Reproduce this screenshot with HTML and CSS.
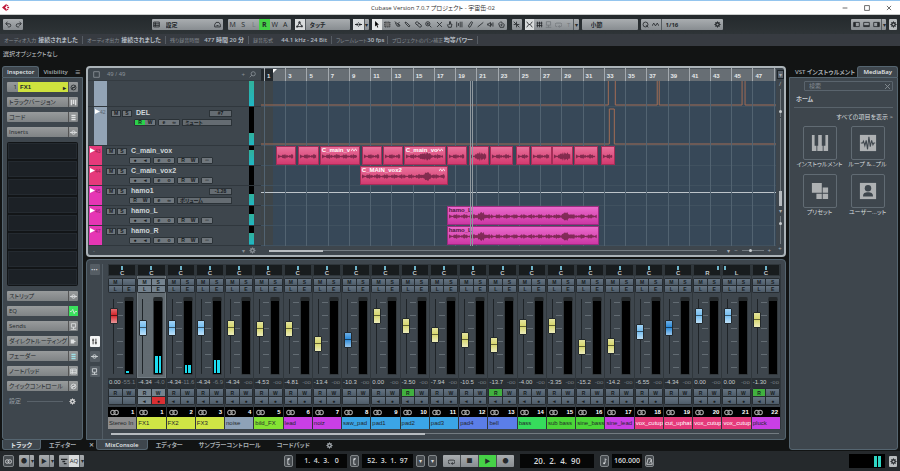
FILE: index.html
```html
<!DOCTYPE html>
<html lang="ja">
<head>
    <meta charset="UTF-8">
    <meta name="viewport" content="width=device-width, initial-scale=1.0">
    <title>Cubase Version 7.0.7 プロジェクト - 宇宙缶-02</title>
    <link rel="stylesheet" href="styles.css">
</head>
<body>

    <svg class="sprite" aria-hidden="true">
        <symbol id="i-undo" viewBox="0 0 10 10"><path d="M3.5 1L1 4l3 2.5M1.5 4H6a2.2 2.2 0 0 1 0 4.500H4"/></symbol>
        <symbol id="i-redo" viewBox="0 0 10 10"><path d="M6.5 1L9 4 6 6.5M8.5 4H4a2.2 2.2 0 0 0 0 4.500h2"/></symbol>
        <symbol id="i-list" viewBox="0 0 10 10"><path d="M1 1.5h8v7H1zM1 4h8M1 6.300h8M3.5 2v6"/></symbol>
        <symbol id="i-box" viewBox="0 0 10 10"><path d="M1 1h8v8H1z"/></symbol>
        <symbol id="i-camera" viewBox="0 0 10 10"><path d="M1 8.500V5l2-3h4l2 3v3.500zM3.500 6.500h3"/></symbol>
        <symbol id="i-auto" viewBox="0 0 10 10"><path d="M1 8h8M2 8l3-6 3 5"/><circle cx="5" cy="2" r="1.200"/><circle cx="1.500" cy="8" r="1"/><circle cx="8.500" cy="7.500" r="1"/></symbol>
        <symbol id="i-scroll" viewBox="0 0 12 10"><path class="f" d="M0 4h3V2l3 3-3 3V6H0zM12 4H9V2L6 5l3 3V6h3z"/><path d="M6 1v2M6 7v2"/></symbol>
        <symbol id="i-arrow" viewBox="0 0 10 10"><path class="f" d="M3 0v8l2-2 1.500 3.500 1-.5L6 5.500h2.500z"/></symbol>
        <symbol id="i-range" viewBox="0 0 10 10"><path class="g" d="M1 1.500h7.500v7H1z"/><path d="M1 1.500h7.500v7H1z" stroke-dasharray="1.500 1"/></symbol>
        <symbol id="i-split" viewBox="0 0 10 10"><path d="M1 1l7 5M2 3l3 5M5 4l3-2"/><circle cx="7" cy="6.500" r="1.300"/></symbol>
        <symbol id="i-pen" viewBox="0 0 10 10"><path d="M1.500 1.500l1 2.500 4.500 4.500 1.500-1.500L4 2.500z"/></symbol>
        <symbol id="i-erase" viewBox="0 0 10 10"><path d="M1 2l2-1 6 5v2l-2 1-6-5zM4 5l2-2"/></symbol>
        <symbol id="i-zoom" viewBox="0 0 10 10"><circle cx="4" cy="4" r="3"/><path d="M6.200 6.200L9 9M2.500 4h3M4 2.500v3"/></symbol>
        <symbol id="i-x" viewBox="0 0 10 10"><path d="M1.500 1.500l7 7M8.500 1.500l-7 7"/></symbol>
        <symbol id="i-hand" viewBox="0 0 10 10"><path d="M2 5l1.500 4h4L8.500 4.500H6.500V1H5v4H3.500"/></symbol>
        <symbol id="i-warp" viewBox="0 0 10 10"><path d="M1 1v8M3.500 3v4M6 1v8M8.500 1v8"/></symbol>
        <symbol id="i-brush" viewBox="0 0 10 10"><path d="M3 9L2 7l4-6 2 1-3 6z"/></symbol>
        <symbol id="i-line" viewBox="0 0 10 10"><path d="M1 8.500L9 2"/></symbol>
        <symbol id="i-speaker" viewBox="0 0 10 10"><path d="M1 4v2h1.500L5 8V2L2.500 4zM6.500 3.500v3M8.500 2v6"/></symbol>
        <symbol id="i-fill" viewBox="0 0 10 10"><path d="M1 4l3-3 5 4-1 4H3z"/><circle cx="5" cy="5.500" r="1"/></symbol>
        <symbol id="i-cross" viewBox="0 0 10 10"><path d="M1 1l4 4V1M5 5v4M5 5h4M1 5h3M6 6l3 3"/></symbol>
        <symbol id="i-snap" viewBox="0 0 10 10"><path d="M1 1l3 4-3 4M9 1L6 5l3 4M4 5h2"/></symbol>
        <symbol id="i-grid" viewBox="0 0 10 10"><path d="M2 1v8M5 1v8M8 1v8M1 3h8M1 6.500h8"/></symbol>
        <symbol id="i-gear" viewBox="0 0 10 10"><circle cx="5" cy="5" r="2.500" stroke-width="2"/><path d="M5 .5v2M5 7.500v2M.5 5h2M7.500 5h2M2 2l1.500 1.500M6.500 6.500L8 8M8 2L6.500 3.500M3.500 6.500L2 8"/></symbol>
        <symbol id="i-zoneL" viewBox="0 0 10 8"><path d="M1 1h8v6H1z"/><path class="f" d="M1 1h3v6H1z"/></symbol>
        <symbol id="i-zoneB" viewBox="0 0 10 8"><path d="M1 1h8v6H1z"/><path class="f" d="M1 5h8v2H1z"/></symbol>
        <symbol id="i-zoneR" viewBox="0 0 10 8"><path d="M1 1h8v6H1z"/><path class="f" d="M6 1h3v6H6z"/></symbol>
        <symbol id="i-wave" viewBox="0 0 10 10"><path d="M0 7l2.500-4 2.500 4 2.500-4L10 7"/></symbol>
        <symbol id="i-q" viewBox="0 0 10 10"><circle cx="5" cy="5" r="3.500"/><path d="M5.500 6L9 9"/></symbol>
        <symbol id="i-search" viewBox="0 0 10 10"><circle cx="6" cy="4" r="3"/><path d="M4 6L1 9"/></symbol>
        <symbol id="i-bars" viewBox="0 0 10 10"><path class="f" d="M1 1h2v8H1zM4 1h2v6H4zM7 1h2v8H7z"/></symbol>
        <symbol id="i-chord" viewBox="0 0 10 10"><path class="f" d="M2 1h6v2H2zM2 4h6v2H2zM2 7h6v2H2z"/></symbol>
        <symbol id="i-quantpanel" viewBox="0 0 10 10"><path class="f" d="M0 1h9v2H0zM2 4h4v2H2zM4 7h4v2H4z"/></symbol>
        <symbol id="i-ins" viewBox="0 0 10 10"><circle cx="5" cy="5" r="2.500"/><path d="M0 5h10"/></symbol>
        <symbol id="i-eq" viewBox="0 0 10 10"><path d="M0 5h2l2-3 2 6 1.500-3H10"/></symbol>
        <symbol id="i-send" viewBox="0 0 10 10"><path d="M2 1h6v5H2zM5 6v3M1 9h8"/></symbol>
        <symbol id="i-route" viewBox="0 0 10 10"><path class="f" d="M1 2h5v6H1zM6 4l3 1-3 1z"/></symbol>
        <symbol id="i-bypass" viewBox="0 0 10 10"><circle cx="5" cy="5" r="3.500"/><path d="M2.500 7.500L8 2.500M3 5h4"/></symbol>
        <symbol id="i-stereo" viewBox="0 0 10 8"><circle cx="3.200" cy="4" r="2.600"/><circle cx="6.800" cy="4" r="2.600"/></symbol>
        <symbol id="i-fader" viewBox="0 0 10 10"><path d="M3 1v8M7 1v8M1.500 3h3M5.500 7h3"/></symbol>
        <symbol id="i-loop" viewBox="0 0 10 10"><path d="M3 8H2.500a2.500 2.500 0 0 1 0-5h5a2.500 2.500 0 0 1 0 5H5M6.500 6L5 8l1.500 1.500"/></symbol>
        <symbol id="i-metro" viewBox="0 0 10 10"><path d="M3 1h4l2 8H1zM5 7l3-5"/></symbol>
        <symbol id="i-note" viewBox="0 0 10 10"><path d="M6 1v6M6 1l2 2"/><circle class="f" cx="4.500" cy="7.500" r="1.500"/></symbol>
        <symbol id="i-loc" viewBox="0 0 10 10"><path d="M7 1H4v8h3"/><path class="f" d="M4 1h3L4 4z"/></symbol>
        <symbol id="i-audio" viewBox="0 0 10 10"><path class="f" d="M0 0l10 5-10 5z"/></symbol>
        <symbol id="i-keys" viewBox="0 0 20 20"><path class="f" d="M1 1h3v12h2v6H1zM8 1h0v12H7v6h6v-6h-1V1h-1v0H8zM16 1h3v18h-5v-6h2z"/></symbol>
        <symbol id="i-loopfile" viewBox="0 0 20 20"><path class="f" d="M1 1h18v18H1z"/><path class="d" d="M2 10h2l1-2 1.500 5L8 7l1.500 10L11 3l1.500 11L14 7l1.500 5 1-2H18"/></symbol>
        <symbol id="i-preset" viewBox="0 0 20 20"><path class="f" d="M1 1h11v11H1zM13 6h6v6h-6zM6 13h6v6H6zM13 13h6v6h-6z"/></symbol>
        <symbol id="i-user" viewBox="0 0 20 20"><path class="f" d="M1 1h18v18H1z"/><path class="hole" d="M4.500 16c0-3.500 2-4.500 5.500-4.500s5.500 1 5.500 4.500z"/><circle class="hole" cx="10" cy="7" r="3.600"/></symbol>
    </svg>

    <header class="titlebar">
        <svg class="logo" viewBox="0 0 12 10" aria-label="Cubase"><path d="M6 0L0 5l6 5V7L4 5l2-2zM6.500 1L9 3H6.500zM7 4h2.500v2H7zM6.500 7H9L6.500 9z"/></svg>
        <h1>Cubase Version 7.0.7 プロジェクト - 宇宙缶-02</h1>
        <div class="window-buttons">
            <button aria-label="最小化"><svg viewBox="0 0 10 10"><path d="M1 5h8"/></svg></button>
            <button aria-label="最大化"><svg viewBox="0 0 10 10"><path d="M1 1h8v8H1z"/></svg></button>
            <button aria-label="閉じる"><svg viewBox="0 0 10 10"><use href="#i-x"/></svg></button>
        </div>
    </header>

    <nav class="toolbar" aria-label="ツールバー">
        <div class="group">
            <button aria-label="元に戻す"><svg><use href="#i-undo"/></svg></button>
            <button aria-label="やり直し"><svg><use href="#i-redo"/></svg></button>
        </div>
        <div class="toolbar-center">
            <div class="group config">
                <button aria-label="一覧"><svg><use href="#i-list"/></svg></button>
                <select aria-label="設定"><option>設定</option></select>
                <button aria-label="スナップショット"><svg><use href="#i-camera"/></svg></button>
            </div>
            <div class="group states">
                <button>M</button><button>S</button><button class="dim">L</button><button class="on">R</button><button>W</button><button>A</button>
            </div>
            <div class="group touch">
                <button class="lit" aria-label="オートメーション"><svg><use href="#i-auto"/></svg></button>
                <select aria-label="オートメーションモード"><option>タッチ</option></select>
            </div>
            <div class="group scroll">
                <button class="lit" aria-label="自動スクロール"><svg><use href="#i-scroll"/></svg></button>
                <button class="drop" aria-label="スクロール設定">▾</button>
            </div>
            <div class="group tools" id="tools"></div>
            <div class="group"><button aria-label="ゼロクロス"><svg><use href="#i-cross"/></svg></button></div>
            <div class="group snap">
                <button class="lit" aria-label="スナップ"><svg><use href="#i-snap"/></svg></button>
                <button aria-label="グリッド"><svg><use href="#i-grid"/></svg></button>
                <button class="dim" aria-label="イベント"><svg><use href="#i-send"/></svg></button>
                <button class="dim" aria-label="シャッフル"><svg><use href="#i-loop"/></svg></button>
                <button class="dim">T</button>
                <button class="drop" aria-label="スナップ設定">▾</button>
            </div>
            <div class="group bar"><select aria-label="グリッドの間隔"><option>小節</option></select></div>
            <div class="group quantize">
                <button aria-label="クオンタイズ"><svg><use href="#i-q"/></svg></button>
                <button aria-label="ソフト"><svg><use href="#i-wave"/></svg></button>
                <select aria-label="クオンタイズ値"><option>1/16</option></select>
                <button aria-label="クオンタイズ設定"><svg><use href="#i-gear"/></svg></button>
            </div>
        </div>
        <div class="toolbar-right">
            <div class="group">
                <button aria-label="左ゾーン"><svg><use href="#i-zoneL"/></svg></button>
                <button aria-label="下ゾーン"><svg><use href="#i-zoneB"/></svg></button>
                <button aria-label="右ゾーン"><svg><use href="#i-zoneR"/></svg></button>
                <button class="drop" aria-label="ゾーン設定">▾</button>
            </div>
            <button class="gear lit" aria-label="設定"><svg><use href="#i-gear"/></svg></button>
        </div>
    </nav>

    <dl class="info">
        <div><dt>オーディオ入力</dt><dd>接続されました</dd></div>
        <div><dt>オーディオ出力</dt><dd>接続されました</dd></div>
        <div><dt>残り録音時間</dt><dd>477 時間 20 分</dd></div>
        <div><dt>録音形式</dt><dd>44.1 kHz - 24 Bit</dd></div>
        <div class="narrow"><dt>フレームレート</dt><dd>30 fps</dd></div>
        <div><dt>プロジェクトのパン補正</dt><dd>均等パワー</dd></div>
    </dl>

    <p class="selection">選択オブジェクトなし</p>

    <main>
        <aside class="inspector">
            <div class="tabs top">
                <button class="tab active">Inspector</button>
                <button class="tab">Visibility</button>
                <button class="tab menu" aria-label="メニュー">≡</button>
            </div>
            <div class="panel">
                <div class="row track"><span class="num">1</span><button>FX1 <i>▸</i></button><span class="end"><svg><use href="#i-bypass"/></svg></span></div>
                <button class="row">トラックバージョン<span class="end"><svg><use href="#i-bars"/></svg></span></button>
                <button class="row">コード<span class="end"><svg><use href="#i-chord"/></svg></span></button>
                <button class="row">Inserts<span class="end"><svg><use href="#i-ins"/></svg></span></button>
                <div class="slots"><i></i><i></i><i></i><i></i><i></i><i></i><i></i><i></i></div>
                <button class="row">ストリップ<span class="end"><svg><use href="#i-ins"/></svg></span></button>
                <button class="row">EQ<span class="end green"><svg><use href="#i-eq"/></svg></span></button>
                <button class="row">Sends<span class="end"><svg><use href="#i-send"/></svg></span></button>
                <button class="row">ダイレクトルーティング<span class="end"><svg><use href="#i-route"/></svg></span></button>
                <button class="row">フェーダー<span class="end cyan"><svg><use href="#i-chord"/></svg></span></button>
                <button class="row">ノートパッド<span class="end"><svg><use href="#i-list"/></svg></span></button>
                <button class="row">クイックコントロール<span class="end"><svg><use href="#i-bypass"/></svg></span></button>
                <button class="settings">設定<hr><svg><use href="#i-gear"/></svg></button>
            </div>
            <div class="tabs bottom">
                <button class="tab active">トラック</button>
                <button class="tab">エディター</button>
            </div>
        </aside>

        <div class="center">
            <section class="project">
                <div class="tracks">
                    <div class="tracks-head"><svg><use href="#i-box"/></svg><span>49 / 49</span><button aria-label="トラックを追加">+</button><button aria-label="検索"><svg><use href="#i-search"/></svg></button></div>
                    <div id="track-list"></div>
                    <div class="tracks-foot"><span>-</span><button aria-label="サイズ">▾</button><button aria-label="設定"><svg><use href="#i-gear"/></svg></button></div>
                </div>
                <div class="arrange">
                    <div class="timeline" id="timeline">
                        <div class="ruler"></div>
                        <div class="lanes"><i></i><i></i><i></i><i></i><i></i><i></i><i></i></div>
                        <svg class="automation" viewBox="0 0 516 165" preserveAspectRatio="none">
                            <path d="M0 24H348V0M355 0V24H397V0M399 0V24H482V0M485 0V24H516M0 63H349V28H354V63H516"/>
                            <path class="light" d="M0 111.500H516"/>
                        </svg>
                        <svg class="flag" viewBox="0 0 4 4"><path class="f" d="M0 0h4L0 4z"/></svg>
                        <div class="playhead"></div>
                    </div>
                    <div class="h-scroll"><div class="scrollbar"><i></i></div><span>▾</span><span>−</span><input type="range" value="40" aria-label="横ズーム"><span>+</span></div>
                </div>
                <div class="v-scroll">
                    <button aria-label="表示設定">▾</button>
                    <span>∕</span>
                    <input type="range" value="15" aria-label="波形ズーム">
                    <div class="thumb-track"><i></i></div>
                    <span>▾</span>
                    <input type="range" value="75" aria-label="縦ズーム">
                    <span>+</span>
                </div>
            </section>

            <section class="mixer">
                <div class="mixer-side">
                    <button aria-label="メニュー">•••</button>
                    <button class="lit first" aria-label="フェーダー"><svg><use href="#i-fader"/></svg></button>
                    <button aria-label="インサート"><svg><use href="#i-ins"/></svg></button>
                    <button aria-label="センド"><svg><use href="#i-send"/></svg></button>
                </div>
                <div class="mixer-main">
                    <div class="channels" id="channels"></div>
                    <div class="scrollbar"><i></i></div>
                </div>
            </section>

            <div class="tabs bottom lower">
                <button class="tab close" aria-label="閉じる">✕</button>
                <button class="tab active">MixConsole</button>
                <button class="tab">エディター</button>
                <button class="tab">サンプラーコントロール</button>
                <button class="tab">コードパッド</button>
                <button class="tab" aria-label="設定"><svg><use href="#i-gear"/></svg></button>
            </div>
        </div>

        <aside class="media">
            <div class="tabs top">
                <button class="tab">VST インストゥルメント</button>
                <button class="tab active">MediaBay</button>
            </div>
            <div class="panel">
                <div class="search"><input type="text" placeholder="検索" aria-label="検索"><button aria-label="消去"><svg><use href="#i-x"/></svg></button></div>
                <h2>ホーム</h2>
                <a class="all" href="#">すべての項目を表示 &gt;</a>
                <div class="tiles">
                    <button class="tile"><span><svg><use href="#i-keys"/></svg></span>インストゥルメント</button>
                    <button class="tile"><span><svg><use href="#i-loopfile"/></svg></span>ループ &amp;...プル</button>
                    <button class="tile"><span><svg><use href="#i-preset"/></svg></span>プリセット</button>
                    <button class="tile"><span><svg><use href="#i-user"/></svg></span>ユーザー...ット</button>
                </div>
            </div>
        </aside>
    </main>

    <footer class="transport">
        <div class="t-group left">
            <button class="key" aria-label="オーディオ"><svg><use href="#i-stereo"/></svg></button>
            <div class="group"><button>●</button><button class="drop">▾</button></div>
            <div class="group"><button>▶</button><button class="drop">▾</button></div>
            <div class="group"><button aria-label="モード"><svg><use href="#i-quantpanel"/></svg></button><button class="lit">AQ</button><button class="drop">▾</button></div>
        </div>
        <div class="t-group mid">
            <button class="key" aria-label="左ロケーター"><svg><use href="#i-loc"/></svg></button>
            <output class="locator">1. &nbsp;4. &nbsp;3. &nbsp; 0</output>
            <button class="key" aria-label="右ロケーター"><svg><use href="#i-loc"/></svg></button>
            <output class="locator">52. &nbsp;3. &nbsp;1. &nbsp;97</output>
            <button class="key" aria-label="パンチイン">▾</button>
            <button class="key" aria-label="パンチアウト">▾</button>
            <div class="group play">
                <button aria-label="サイクル"><svg><use href="#i-loop"/></svg></button>
                <button aria-label="停止">■</button>
                <button class="on" aria-label="再生">▶</button>
                <button aria-label="録音">●</button>
            </div>
            <output class="position">20. &nbsp;2. &nbsp;4. &nbsp;90</output>
            <button class="key" aria-label="テンポ"><svg><use href="#i-note"/></svg></button>
            <output class="tempo">160.000</output>
            <button class="key" aria-label="メトロノーム"><svg><use href="#i-metro"/></svg></button>
        </div>
        <div class="t-group">
            <div class="level"><i></i><i></i></div>
            <button class="gear lit" aria-label="設定"><svg><use href="#i-gear"/></svg></button>
        </div>
    </footer>

    <script src="script.js"></script>
</body>
</html>
```

FILE: styles.css
```css
* { box-sizing: border-box; }
body {
    margin: 0;
    min-height: 100vh;
    display: flex;
    flex-direction: column;
    background: #121414;
    color: #c6cbcf;
    font: 6px/8px "Open Sans", "Noto Sans CJK JP", sans-serif;
    font-feature-settings: "palt";
}
button, select, input, output { font: inherit; color: inherit; }
button, select {
    appearance: none;
    border: 0;
    margin: 0;
    padding: 0;
    background: none;
    white-space: nowrap;
}
button { display: flex; align-items: center; justify-content: center; }
p, h1, h2, dl, dd, dt, hr { margin: 0; }
i { font-style: normal; }
svg { width: 7px; height: 7px; fill: none; stroke: currentColor; stroke-width: 1.2; flex: none; }
svg .f { fill: currentColor; stroke: none; }
svg .g { fill: #777; stroke: none; }
svg .d { stroke: #3e464d; }
svg .hole { fill: #3e464d; stroke: none; }
.sprite { position: absolute; width: 0; height: 0; }

/* title bar */
.titlebar {
    display: grid;
    grid-template-columns: 1fr auto 1fr;
    align-items: center;
    height: 15px;
    padding: 0 8px 0 2px;
    background: #fff;
    border-top: 1px solid #94c5ee;
    border-bottom: 1px solid #c9cccb;
    color: #333;
}
.titlebar h1 { font-size: 6px; font-weight: 400; padding-right: 28px; }
.logo { width: 9px; height: 9px; fill: #bd1638; stroke: none; }
.window-buttons { display: flex; justify-content: flex-end; gap: 16px; }
.window-buttons svg { width: 6px; height: 6px; }

/* toolbar */
.toolbar {
    display: flex;
    justify-content: space-between;
    align-items: center;
    height: 19px;
    padding: 0 3px;
    background: linear-gradient(#24292c, #2e3437);
}
.toolbar-center, .toolbar-right { display: flex; gap: 3px; }
.group {
    display: flex;
    height: 11px;
    background: linear-gradient(#a9adb0, #888d91);
    border-radius: 1px;
    color: #25292c;
}
.group button { flex: 1; min-width: 10px; }
.group .dim { color: #73787c; }
.group .on { background: #46d147; font-weight: 700; }
.group .lit { background: #d9dcdd; }
.group select { flex: 1; min-width: 0; padding: 0 4px; font-weight: 700; }
.group button.drop { flex: 0 0 5px; min-width: 5px; border-left: 1px solid #555b5f; }
.config { width: 71px; }
.config button { flex: 0 0 10px; }
.states { width: 63px; margin-left: 2px; font-size: 7px; }
.touch { width: 55px; margin-left: 1px; }
.touch button { flex: 0 0 10px; }
.touch select, .quantize select { border-left: 1px solid #555b5f; }
.scroll { width: 16px; }
.tools { width: 135px; }
.tools + .group { margin-left: 2px; }
.tools .lit { background: #e6e8e8; color: #000; }
.snap { width: 54px; }
.snap button { min-width: 8px; }
.bar { width: 56px; }
.bar select { padding-left: 9px; }
.quantize { width: 82px; }
.quantize button { flex: 0 0 10px; }
.gear { width: 8px; height: 11px; color: #25292c; background: #b9bdbf; border-radius: 1px; }

/* info line */
.info {
    display: flex;
    height: 12px;
    background: #373b41;
    align-items: center;
}
.info div {
    display: flex;
    justify-content: space-between;
    width: 83px;
    padding: 0 4px;
    border-right: 1px solid #565c63;
    white-space: nowrap;
}
.info .narrow { width: 56px; }
.info div:last-child { width: 90px; }
.info dt { font-size: 5px; color: #858b92; }
.info dd { font-weight: 600; color: #b4bbc3; }
.selection { padding: 4px 3px 8px; }

main { flex: 1; display: flex; gap: 3px; padding: 0 2px 1px; }

/* tabs and side panels */
.tabs { display: flex; }
.tab { height: 11px; padding: 0 6px; font-weight: 600; color: #a6acb1; }
.tab.active { background: #3e464d; border: 1px solid #556570; color: #e3e7ea; }
.tabs.top .active { border-bottom: 0; border-radius: 3px 3px 0 0; }
.tabs.bottom .tab { height: 10px; }
.tabs.bottom .active { border-top: 0; border-radius: 0 0 3px 3px; }
.panel {
    flex: 1;
    background: #3e464d;
    border: 1px solid #556570;
    border-radius: 0 0 3px 3px;
}
.inspector { width: 81px; display: flex; flex-direction: column; }
.inspector .tabs.bottom .tab { padding: 0 8px; }
.inspector .tabs.top .tab { padding: 0 4px; }
.inspector .tabs.top .menu { margin-left: auto; padding: 0 3px; }
.inspector .panel { display: flex; flex-direction: column; gap: 5px; padding: 4px; }
.row {
    display: flex;
    justify-content: space-between;
    align-items: center;
    width: 100%;
    height: 10px;
    padding-left: 2px;
    background: linear-gradient(#989b9c, #7f8385);
    border-radius: 1px;
    color: #24282b;
}
.row .end {
    display: flex;
    align-items: center;
    justify-content: center;
    width: 10px;
    height: 10px;
    border-left: 1px solid #555;
    color: #e0e2e3;
}
.row .green { background: #39e05c; }
.row .cyan { color: #9ee0e6; }
.track .num { width: 9px; text-align: right; padding-right: 1px; }
.track button { flex: 1; height: 10px; padding: 0 2px; justify-content: space-between; background: #cfe23e; font: bold 6px "Liberation Sans", sans-serif; }
.track .end { color: #24282b; }
.slots { height: 144px; padding: 1px; display: flex; flex-direction: column; gap: 2px; background: #121517; border-radius: 2px; }
.slots i { flex: 1; background: #1c2126; border: 1px solid #242a30; }
.settings { padding: 0 2px; gap: 6px; height: 10px; color: #989fa5; }
.settings hr { flex: 1; border: 0; border-top: 1px solid #59626a; }
.settings svg { color: #ddd; }

/* project window */
.center { flex: 1; min-width: 0; display: flex; flex-direction: column; }
.project {
    display: flex;
    margin-bottom: 2px;
    border: 2px solid #abb3b8;
    border-radius: 4px;
    background: #3e464d;
}
.tracks { width: 173px; font-family: "Liberation Sans", "Noto Sans CJK JP", sans-serif; }
.tracks-head, .tracks-foot { display: flex; align-items: center; gap: 4px; padding: 0 5px; color: #899097; }
.tracks-head { height: 13px; border-bottom: 1px solid #343b41; }
.tracks-head span, .tracks-foot span { flex: 1; padding-left: 3px; }
.tracks-foot { height: 9px; }
.tracks-foot span { padding: 0; }
.track-row {
    display: flex;
    height: 20px;
    border-bottom: 1px solid #30373d;
    padding: 0 4px 0 1px;
}
.track-row.sub { height: 26px; }
.track-row.del { height: 39px; }
.strip { width: 13px; padding: 2px 0 0 1px; color: #fff; font-size: 5px; line-height: 6px; background: var(--c); white-space: nowrap; }
.strip svg { width: 5px; height: 5px; }
.strip b { opacity: .4; color: #000; font-weight: 400; }
.sub .strip, .del .strip { margin-left: 5px; }
.track-body { flex: 1; display: flex; flex-direction: column; gap: 2px; padding: 1px 17px 0 4px; }
.del .track-body { padding-top: 2px; }
.line { display: flex; gap: 1px; align-items: center; height: 8px; }
.line b { flex: 1; padding-left: 3px; font-size: 7px; color: #d0d6da; }
.line.ctl { padding-left: 23px; gap: 2px; height: 7px; }
.mini { display: flex; background: #70777d; border: 1px solid #2b3237; border-radius: 1px; height: 7px; width: 22px; }
.mini button, .ms { flex: 1; font-size: 5px; line-height: 5px; font-weight: 700; color: #14181b; }
.mini .on { background: #2bd04b; }
.mini.kbd { width: 12px; }
.ms { flex: none; width: 10px; height: 7px; background: #70777d; border: 1px solid #2b3237; }
.value { width: 23px; height: 7px; border: 1px solid #2b3237; background: #656c72; color: #14181b; font-size: 5px; line-height: 5px; text-align: center; font-weight: 700; }
.value.wide { flex: 1; text-align: left; padding-left: 2px; }
.meter { width: 5px; margin-right: 3px; background: linear-gradient(to top, #20b6c5, #31b09a) bottom / 100% var(--l) no-repeat #000; }

.arrange { flex: 1; min-width: 0; display: flex; flex-direction: column; }
.timeline { position: relative; overflow: hidden; flex: 1; background: linear-gradient(to right, #3e4549 12px, #374858 12px); }
.ruler { height: 13px; border-top: 1px solid #495158; background: linear-gradient(to right, #22282d 12px, #676e74 12px); }
.lanes i { display: block; height: 20px; border-bottom: 1px solid #40515f; }
.lanes i:nth-child(1) { height: 26px; }
.lanes i:nth-child(2) { height: 39px; }
.bar-line { position: absolute; top: 0; bottom: 0; border-left: 1px solid #526371; font: bold 6px/13px "Liberation Sans", sans-serif; color: #e6e9eb; }
.bar-line span { display: block; height: 13px; padding: 2px 0 0 2px; border-left: 1px solid #a3a9ae; margin-left: -1px; }
.automation { position: absolute; top: 13px; left: 0; width: 100%; height: 165px; stroke: #a36c54; }
.automation path { vector-effect: non-scaling-stroke; stroke-width: 1px; }
.automation .light { stroke: #bdc4ca; }
.flag { position: absolute; top: 1px; left: 12px; width: 4px; height: 4px; color: #fff; }
.playhead { position: absolute; top: 13px; bottom: 0; left: 40.5%; width: 3px; border: 1px solid #8f989e; border-width: 0 1px; }
.clip {
    position: absolute;
    height: 19px;
    overflow: hidden;
    border: 1px solid #a52e58;
    background: linear-gradient(#e8709a, #d43a70);
    color: #fff;
    font: bold 6px/7px "Liberation Sans", sans-serif;
    white-space: nowrap;
    padding-left: 1px;
}
.clip.hamo { background: linear-gradient(#ea6acb, #cd37a5); border-color: #9c2b80; color: #4c1740; }
.clip .wave { position: absolute; left: 0; top: 0; width: 100%; height: 100%; fill: #6b2241; fill-opacity: .8; stroke: none; }
.clip .mark { position: absolute; right: 2px; top: 0; width: 6px; height: 6px; }
.h-scroll { height: 9px; display: flex; align-items: center; gap: 4px; padding: 0 5px 0 8px; color: #a9b0b5; }
.scrollbar { flex: 1; height: 1px; background: #737b81; display: flex; align-items: center; }
.scrollbar i { height: 2px; width: 12%; flex: none; background: #b6bbbf; }
.h-scroll .scrollbar { margin-right: 6px; }
.h-scroll input { appearance: none; width: 22px; height: 1px; margin: 0; background: #737b81; }
.h-scroll input::-webkit-slider-thumb, .v-scroll input::-webkit-slider-thumb { appearance: none; width: 3px; height: 3px; border-radius: 2px; background: #c8cdd0; }
.v-scroll { width: 8px; padding: 2px 0; display: flex; flex-direction: column; align-items: center; gap: 1px; color: #a9b0b5; }
.v-scroll button { width: 7px; height: 9px; border: 1px solid #1e2429; background: #59616a; }
.v-scroll input { appearance: none; writing-mode: vertical-lr; direction: rtl; width: 1px; height: 28px; margin: 0; background: #737b81; }
.thumb-track { flex: 1; width: 3px; display: flex; flex-direction: column; justify-content: flex-end; background: linear-gradient(#737b81, #737b81) center / 1px 100% no-repeat; }
.thumb-track i { height: 15px; background: #b6bbbf; }

/* mixer */
.mixer {
    flex: 1;
    display: flex;
    padding: 4px 4px 0 0;
    background: #3e464d;
    border: 1px solid #556570;
    border-radius: 4px 4px 3px 0;
}
.mixer-side { width: 16px; margin-right: 5px; display: flex; flex-direction: column; align-items: center; gap: 4px; border-right: 1px solid #525c64; }
.mixer-side button { width: 10px; height: 11px; border-radius: 1px; background: #555d64; color: #d7dbde; }
.mixer-side .first { margin-top: 57px; }
.mixer-side .lit { background: #f4f5f5; color: #222; }
.mixer-main { flex: 1; min-width: 0; }
.channels { display: grid; grid-template-columns: repeat(23, minmax(0, 1fr)); font-family: "Liberation Sans", sans-serif; }
.mixer .scrollbar { margin: 4px 2px 0 3px; }
.mixer .scrollbar i { width: 47%; }
.channel { border-right: 1px solid #30373c; }
.channel .upper { padding-bottom: 3px; }
.channel.selected .upper { background: #626b71; box-shadow: 0 0 0 1px #747e85 inset; }
.pan { height: 12px; padding-top: 5px; text-align: center; font-weight: 700; line-height: 6px; color: #c4cacd; border: 1px solid #2f363b; background: linear-gradient(#6fb4c9, #6fb4c9) var(--p) 1px / 2px 4px no-repeat #181c1e; }
.buttons { display: grid; grid-template-columns: 1fr 1fr; gap: 1px; margin: 2px 0 4px; padding: 1px; background: #262c31; border-radius: 2px; }
.buttons button { height: 6px; background: linear-gradient(#667482, #4e5c69); color: #171c20; font-size: 5px; font-weight: 700; }
.selected .buttons button { background: #75838f; }
.buttons .on { background: #41b13f; }
.selected .buttons .rec { background: #da2f33; }
.buttons.rw { margin: 0 0 2px; }
.buttons.rw button { height: 7px; }
.fader {
    display: flex;
    height: 78px;
    gap: 6px;
    background: repeating-linear-gradient(#636c73 0 1px, transparent 1px 13px) 9px 5px / 6px 68px no-repeat;
}
.fader input {
    appearance: none;
    writing-mode: vertical-lr;
    direction: rtl;
    width: 9px;
    height: 78px;
    margin: 0 0 0 1px;
    background: linear-gradient(#1f2428, #1f2428) center / 1px 96% no-repeat;
}
.fader input::-webkit-slider-thumb {
    appearance: none;
    width: 8px;
    height: 16px;
    border: 1px solid #242a2e;
    border-radius: 1px;
    background: linear-gradient(transparent 6px, #0008 6px, #0008 7px, transparent 7px), linear-gradient(#fff5, #fff0 45%, #fff8), var(--cap);
}
.level-box {
    display: flex;
    gap: 1px;
    align-items: flex-end;
    width: 10px;
    padding: 0 1px 1px;
    border: 1px solid #33393d;
    border-top: 4px solid #25292b;
    border-radius: 2px;
    background: #000;
}
.level-box i { flex: 1; background: #1cdcf0; height: var(--l); }
.db { display: flex; justify-content: space-between; height: 10px; padding: 0 1px; background: #2a3035; color: #c4cacd; white-space: nowrap; overflow: hidden; }
.db span { color: #757d82; }
.chan-num { display: flex; align-items: center; justify-content: space-between; height: 10px; padding: 0 2px; background: #000; font-weight: 700; color: #fff; }
.chan-num svg { width: 9px; color: #aaa; }
.chan-name { height: 12px; padding: 2px 1px; background: var(--c); color: #24282b; white-space: nowrap; overflow: hidden; }
.chan-name.white { color: #fff; }
.lower .tab { padding: 0 8px; }
.lower .close { padding: 0; width: 10px; }

/* media bay */
.media { width: 109px; display: flex; flex-direction: column; }
.media .tabs { justify-content: space-between; }
.media .tabs .tab { padding: 0 0 0 6px; }
.media .tabs .active { padding: 0 5px; }
.media .panel { padding: 3px 4px 0; }
.search { display: flex; margin-left: 10px; height: 10px; border: 1px solid #5a646d; border-radius: 1px; }
.search input { flex: 1; min-width: 0; border: 0; padding: 0 4px; background: none; }
.search input::placeholder { color: #828a91; }
.search button { width: 10px; color: #8d959b; }
.media h2 { padding: 4px 2px; font-size: 6px; font-weight: 600; border-bottom: 1px solid #59636b; }
.all { display: block; padding: 5px 0; text-align: right; color: #d4d9dc; text-decoration: none; }
.tiles { display: grid; grid-template-columns: 48px 48px; justify-content: center; gap: 6px 0; }
.tile { flex-direction: column; color: #d4d9dc; }
.tile span { display: flex; align-items: center; justify-content: center; width: 34px; height: 34px; border: 1px solid #616b73; border-radius: 2px; color: #aeb1b3; }
.tile svg { width: 18px; height: 18px; }

/* transport */
.transport {
    display: flex;
    align-items: center;
    justify-content: space-between;
    height: 20px;
    padding: 0 3px;
    background: #25292c;
}
.t-group { display: flex; align-items: center; gap: 4px; }
.t-group.mid { gap: 3px; }
.t-group .group { height: 12px; }
.t-group.left { gap: 5px; padding-right: 5px; }
.left .key { width: 11px; }
.key { width: 9px; height: 12px; background: #474c50; border: 1px solid #82878a; border-radius: 2px; color: #d5d8da; }
output { height: 14px; line-height: 14px; background: #060707; color: #d7dadc; text-align: center; font-size: 8px; font-weight: 600; }
.locator { width: 51px; font-size: 7px; }
.position { width: 74px; margin: 0 3px; }
.tempo { width: 30px; font-size: 7px; }
.play { width: 71px; margin-left: 3px; }
.play button + button { border-left: 1px solid #4a4f53; }
.level { display: flex; align-items: flex-end; justify-content: flex-end; gap: 1px; width: 36px; height: 14px; padding: 1px 4px; background: #000; }
.level i { width: 3px; height: 11px; background: #2ed6c3; }
```

FILE: script.js
```js
const icon = (id, cls = '') => `<svg class="${cls}"><use href="#i-${id}"/></svg>`;

// toolbar tools
const tools = ['arrow', 'range', 'split', 'pen', 'erase', 'zoom', 'x', 'hand', 'warp', 'brush', 'line', 'speaker', 'fill'];
document.getElementById('tools').innerHTML = tools
    .map((t, n) => `<button class="${n === 0 ? 'lit' : ''}" aria-label="${t}">${icon(t)}</button>`).join('');

// track list
const audioControls = `
    <div class="mini"><button>●</button><button>◂</button></div>
    <div class="mini"><button>e</button><button>o</button></div>
    <div class="mini"><button>R</button><button>W</button></div>
    <div class="mini kbd"><button>▫▫</button></div>`;
const groupControls = (text, on) => `
    <div class="mini"><button class="${on}">R</button><button>W</button></div>
    <div class="mini"><button>e</button><button>∞</button></div>
    <span class="value wide">${text}</span>`;

const tracks = [
    { type: 'sub', color: '#93a4b6', level: 100 },
    { type: 'del', num: 42, name: 'DEL', color: '#93a4b6', value: '#7', controls: groupControls('ミュート', 'on'), level: 32 },
    { num: 43, name: 'C_main_vox', color: '#e53a7b', controls: audioControls, level: 80 },
    { num: 44, name: 'C_main_vox2', color: '#e53a7b', controls: audioControls, level: 0 },
    { num: 45, name: 'hamo1', color: '#e536b4', value: '-1.28', controls: groupControls('ボリューム', ''), level: 60 },
    { num: 46, name: 'hamo_L', color: '#e536b4', controls: audioControls, level: 60 },
    { num: 47, name: 'hamo_R', color: '#e536b4', controls: audioControls, level: 62 }
];
document.getElementById('track-list').innerHTML = tracks.map(t => `
    <div class="track-row ${t.type || ''}">
        <div class="strip" style="--c:${t.color}">${t.name ? `${icon('audio')}<b>${t.num}</b>` : ''}</div>
        <div class="track-body">${t.name ? `
            <div class="line"><button class="ms">M</button><button class="ms">S</button><b>${t.name}</b>${t.value ? `<span class="value">${t.value}</span>` : ''}</div>
            <div class="line ctl">${t.controls}</div>` : ''}
        </div>
        <div class="meter" style="--l:${t.level}%"></div>
    </div>`).join('');

// timeline, measured in units of 1/516 of its width
const SPAN = 516;
const pct = v => (v / SPAN * 100).toFixed(2) + '%';
const timeline = document.getElementById('timeline');
let html = '';
for (let bar = 1; bar <= 49; bar += 2) {
    html += `<div class="bar-line" style="left:${pct(3 + (bar - 1) * 10.64)}"><span>${bar < 49 ? bar : ''}</span></div>`;
}

function wave(width, mid, amp, bursts) {
    let top = '', bottom = '';
    for (let x = 1; x < width - 1; x++) {
        let a = 0.5 + amp * Math.abs(Math.sin(x * 1.9) * Math.cos(x * 0.37));
        bursts.forEach(b => { a += 4 * Math.exp(-((x - b) ** 2) / 18) * (0.6 + 0.4 * Math.sin(x * 2.5)); });
        top += `${x},${(mid - a).toFixed(1)} `;
        bottom = `${x},${(mid + a).toFixed(1)} ` + bottom;
    }
    return `<svg class="wave" viewBox="0 0 ${width} 18" preserveAspectRatio="none"><polygon points="${top}${bottom}"/></svg>`;
}

// [start, width, top, name, bursts, class]
const clips = [
    [15, 20, 78, '', []], [37, 21, 78, '', []], [59, 40, 78, 'C_main_v', []],
    [101, 20, 78, '', []], [122, 20, 78, '', []], [143, 42, 78, 'C_main_vo', [22]],
    [186, 20, 78, '', []], [208, 20, 78, '', [12]], [229, 24, 78, '', []],
    [255, 15, 78, '', []], [271, 21, 78, '', []], [292, 21, 78, '', [13]],
    [314, 24, 78, '', []], [341, 14, 78, '', []],
    [99, 88, 98, 'C_MAIN_vox2', [68]],
    [186, 153, 138, 'hamo_L', [34, 120], 'hamo'],
    [186, 153, 158, 'hamo_L', [34, 120], 'hamo']
];
html += clips.map(([x, w, y, name, bursts, cls = '']) => `
    <div class="clip ${cls}" style="left:${pct(x)};width:${pct(w)};top:${y}px">
        ${wave(w, 10, 2.2, bursts)}${name}${name && !cls ? icon('wave', 'mark') : ''}
    </div>`).join('');
timeline.querySelector('.playhead').insertAdjacentHTML('beforebegin', html);

// mixer: [name, color, cap, fader, dB, peak, level]
const Y = '#d6d66c', B = '#73bdf0', D = '#2788d8';
const channels = [
    ['Stereo In', '#8d8d8d', '#d32227', 82, '0.00', '-55.1', 3],
    ['FX1', '#cfe545', B, 63, '-4.34', '-4.0', 23],
    ['FX2', '#cfe545', B, 63, '-4.34', '-11.6', 11],
    ['FX3', '#cfe545', B, 63, '-4.34', '-6.9', 18],
    ['noise', '#8ea2b8', Y, 63, '-4.34'],
    ['bild_FX', '#84e234', Y, 62, '-4.53'],
    ['lead', '#c93fe5', Y, 61, '-4.81'],
    ['noiz', '#c93fe5', Y, 37, '-13.4'],
    ['saw_pad', '#3ba5e6', D, 44, '-10.3'],
    ['pad1', '#3ba5e6', Y, 82, '0.00'],
    ['pad2', '#3ba5e6', Y, 66, '-3.50'],
    ['pad3', '#3ba5e6', Y, 52, '-7.94'],
    ['pad4', '#5b7ee8', Y, 44, '-10.5'],
    ['bell', '#5b7ee8', Y, 35, '-13.7'],
    ['bass', '#36dc5c', Y, 64, '-4.00'],
    ['sub bass', '#4bd638', Y, 66, '-3.35'],
    ['sine_bass', '#4bd638', Y, 32, '-15.2'],
    ['sine_lead', '#c93fe5', Y, 34, '-14.2'],
    ['vox_cutup', '#e53a7b', B, 56, '-6.55'],
    ['cut_uphat', '#e53a7b', D, 63, '-4.34'],
    ['vox_cutup', '#e53a7b', B, 82, '0.00'],
    ['vox_cutup', '#e53a7b', B, 82, '0.00'],
    ['pluck', '#c93fe5', Y, 76, '-1.30']
];
const automated = [10, 13, 22];
const plain = [0, 8, 19];   // no monitor / record buttons
document.getElementById('channels').innerHTML = channels.map(([name, color, cap, fader, db, peak = '-oo', level], n) => {
    const pan = n === 20 ? 'R' : n === 21 ? 'L' : 'C';
    const panPos = { L: '4%', C: '50%', R: '96%' }[pan];
    const bars = level ? `<i style="--l:${level}%"></i><i style="--l:${n ? level : 0}%"></i>` : '';
    return `
    <div class="channel ${n === 1 ? 'selected' : ''}">
        <div class="upper">
            <div class="pan" style="--p:${panPos}">${pan}</div>
            <div class="buttons"><button>M</button><button>${n ? 'S' : ''}</button><button>L</button><button>E</button></div>
            <div class="fader">
                <input type="range" value="${fader}" style="--cap:${cap}" aria-label="${name}">
                <div class="level-box">${bars}</div>
            </div>
        </div>
        <div class="db">${db}<span>${peak}</span></div>
        <div class="buttons rw">
            <button class="${automated.includes(n) ? 'on' : ''}">R</button><button>W</button>
            <button>${plain.includes(n) ? '' : '◂'}</button><button class="rec">${plain.includes(n) ? '' : '●'}</button>
        </div>
        <div class="chan-num">${icon('stereo')}${n || 1}</div>
        <div class="chan-name ${color === '#e53a7b' ? 'white' : ''}" style="--c:${color}">${name}</div>
    </div>`;
}).join('');
```
